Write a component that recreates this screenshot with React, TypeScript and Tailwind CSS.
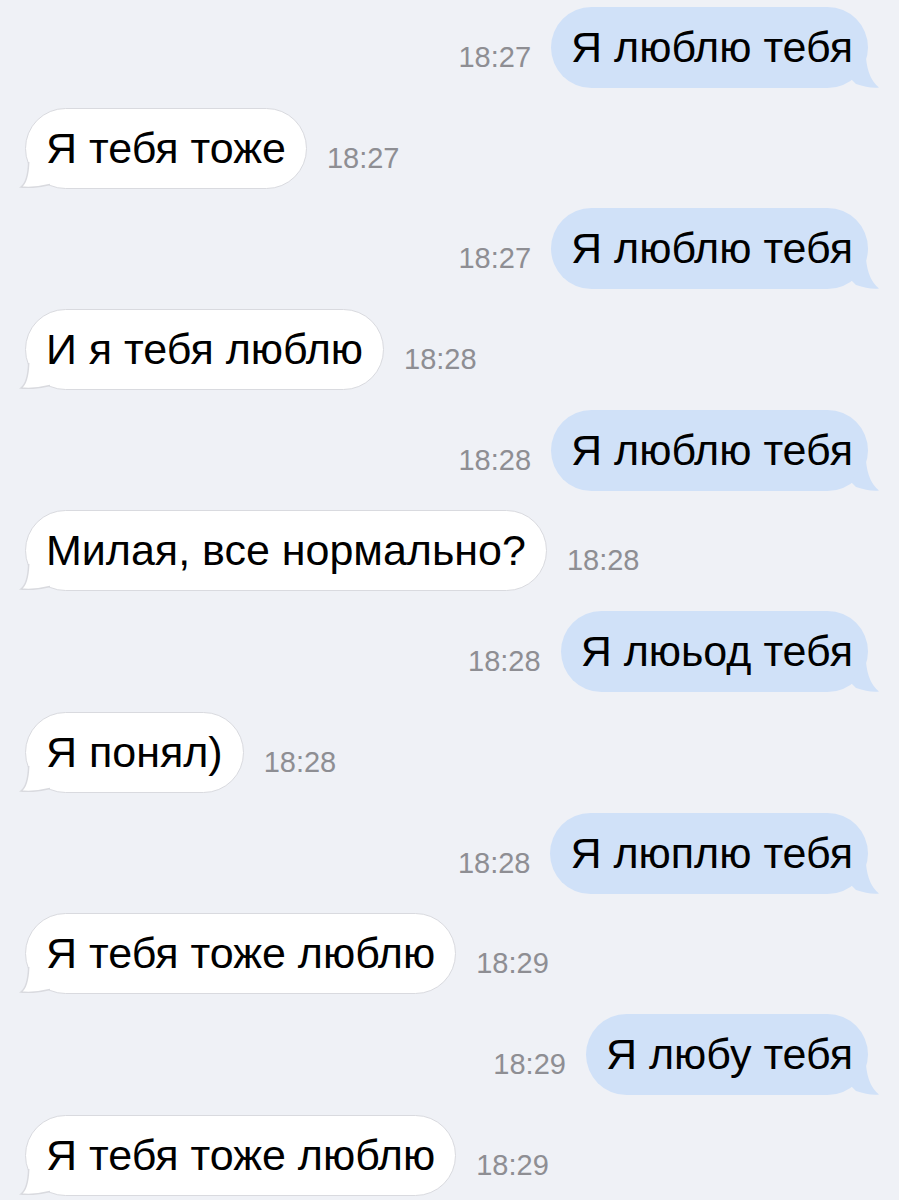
import React from 'react';

type Msg = { out: boolean; text: string; time: string };

const messages: Msg[] = [
  { out: true, text: 'Я люблю тебя', time: '18:27' },
  { out: false, text: 'Я тебя тоже', time: '18:27' },
  { out: true, text: 'Я люблю тебя', time: '18:27' },
  { out: false, text: 'И я тебя люблю', time: '18:28' },
  { out: true, text: 'Я люблю тебя', time: '18:28' },
  { out: false, text: 'Милая, все нормально?', time: '18:28' },
  { out: true, text: 'Я люьод тебя', time: '18:28' },
  { out: false, text: 'Я понял)', time: '18:28' },
  { out: true, text: 'Я люплю тебя', time: '18:28' },
  { out: false, text: 'Я тебя тоже люблю', time: '18:29' },
  { out: true, text: 'Я любу тебя', time: '18:29' },
  { out: false, text: 'Я тебя тоже люблю', time: '18:29' },
];

// хвостик исходящего пузыря (справа снизу)
function OutTail() {
  return (
    <svg
      className="absolute right-[-12px] bottom-0 pointer-events-none"
      width="30"
      height="30"
      viewBox="0 0 30 30"
    >
      <path d="M16 0 Q18 21 29 29.5 Q19 30.5 6 26 L0 20 Z" fill="#d0e1f8" />
    </svg>
  );
}

// хвостик входящего пузыря (слева снизу), с обводкой
function InTail() {
  return (
    <svg
      className="absolute left-[-8px] bottom-0 pointer-events-none"
      width="40"
      height="30"
      viewBox="0 0 40 30"
    >
      <path d="M10.7 4 Q10 24 3 29 Q16 30.5 32 26.5 L32 18 L14 4 Z" fill="#ffffff" />
      <path
        d="M10.7 4 Q10 24 3 29 Q16 30.5 32 26.5"
        fill="none"
        stroke="#d9dadf"
        strokeWidth="1.5"
      />
    </svg>
  );
}

function Row({ m }: { m: Msg }) {
  const time = (
    <span className="text-[29px] leading-none text-[#8e8e93] mb-[16px] shrink-0">{m.time}</span>
  );
  if (m.out) {
    return (
      <div className="flex justify-end items-end gap-[20px] pr-[31px]">
        {time}
        <div className="relative h-[81px] flex items-center pl-[20px] pr-[15px] rounded-[40.5px] bg-[#d0e1f8]">
          <OutTail />
          <span className="relative text-[43px] leading-none text-black whitespace-nowrap">{m.text}</span>
        </div>
      </div>
    );
  }
  return (
    <div className="flex justify-start items-end gap-[20px] pl-[25px]">
      <div className="relative h-[81px] flex items-center px-[20px] rounded-[40.5px] bg-white border-[1.5px] border-[#d9dadf]">
        <InTail />
        <span className="relative text-[43px] leading-none text-black whitespace-nowrap">{m.text}</span>
      </div>
      {time}
    </div>
  );
}

export default function App() {
  return (
    <div
      className="w-[899px] h-[1200px] overflow-hidden bg-[#eff1f6] flex flex-col gap-[19.7px] pt-[7px]"
      style={{ fontFamily: '"Liberation Sans", Arial, sans-serif' }}
    >
      {messages.map((m, i) => (
        <Row key={i} m={m} />
      ))}
    </div>
  );
}
